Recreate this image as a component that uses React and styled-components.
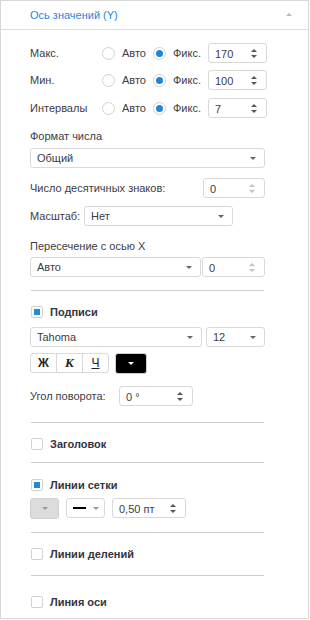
import React from "react"
import styled, { createGlobalStyle } from "styled-components"

const GlobalStyle = createGlobalStyle`
  body {
    margin: 0;
    background: #ffffff;
    font-family: "Liberation Sans", Arial, sans-serif;
  }
`

const App = () => {
  return (
    <Panel>
      <GlobalStyle />
      <Header>
        <Title>Ось значений (Y)</Title>
        <Caret />
      </Header>
      <Body>
        <RadioRow label="Макс." value="170" $mt={13} />
        <RadioRow label="Мин." value="100" $mt={7} />
        <RadioRow label="Интервалы" value="7" $mt={8} />

        <Caption $mt={12}>Формат числа</Caption>
        <Row $mt={6}>
          <Select $w={235}>Общий</Select>
        </Row>

        <Row $mt={10} $between>
          <Label>Число десятичных знаков:</Label>
          <Spin $w={62} value="0" muted />
        </Row>

        <Row $mt={8}>
          <Label $w={54}>Масштаб:</Label>
          <Select $w={149}>Нет</Select>
        </Row>

        <Caption $mt={14}>Пересечение с осью X</Caption>
        <Row $mt={5} $gap={1}>
          <Select $w={171}>Авто</Select>
          <Spin $w={63} value="0" muted />
        </Row>

        <Divider $mt={13} />

        <Check checked $mt={11}>Подписи</Check>
        <Row $mt={5} $gap={4}>
          <Select $w={172}>Tahoma</Select>
          <Select $w={59}>12</Select>
        </Row>
        <Row $mt={6} $gap={6}>
          <StyleGroup>
            <StyleBtn $bold>Ж</StyleBtn>
            <StyleBtn $italic>К</StyleBtn>
            <StyleBtn $under>Ч</StyleBtn>
          </StyleGroup>
          <ColorBtn $fill="#000000" $arrow="#ffffff" />
        </Row>

        <Row $mt={13}>
          <Label $w={89}>Угол поворота:</Label>
          <Spin $w={74} value="0 °" />
        </Row>

        <Divider $mt={16} />
        <Check $mt={11}>Заголовок</Check>
        <Divider $mt={8} />
        <Check checked $mt={12}>Линии сетки</Check>
        <Row $mt={3} $gap={7}>
          <ColorBtn $fill="#dcdcdc" $arrow="#9a9a9a" $w={29} />
          <LineBtn>
            <LineSample />
            <SmallArrow $color="#999" />
          </LineBtn>
          <Spin $w={74} value="0,50 пт" />
        </Row>
        <Divider $mt={14} />
        <Check $mt={11}>Линии делений</Check>
        <Divider $mt={11} />
        <Check $mt={16}>Линия оси</Check>
      </Body>
    </Panel>
  )
}

export default App

const RadioRow = ({ label, value, $mt }) => (
  <Row $mt={$mt}>
    <Label $w={72}>{label}</Label>
    <Radio />
    <RadioText>Авто</RadioText>
    <Radio checked />
    <RadioText>Фикс.</RadioText>
    <Spin $w={59} value={value} push />
  </Row>
)

const Spin = ({ value, $w, muted, push }) => (
  <SpinBox $w={$w} $push={push}>
    <span>{value}</span>
    <Arrows $muted={muted}>
      <Up />
      <Down />
    </Arrows>
  </SpinBox>
)

const Select = ({ children, $w }) => (
  <SelectBox $w={$w}>
    <span>{children}</span>
    <SmallArrow $color="#666" />
  </SelectBox>
)

const Check = ({ checked, children, $mt }) => (
  <CheckRow $mt={$mt}>
    <Box>{checked && <Tick />}</Box>
    <CheckText>{children}</CheckText>
  </CheckRow>
)

const Panel = styled.div`
  width: 309px;
  height: 619px;
  box-sizing: border-box;
  border: 1px solid #d6d6d6;
  background: #ffffff;
  color: #3c3c46;
  font-size: 11px;
  overflow: hidden;
`

const Header = styled.div`
  height: 28px;
  border-bottom: 1px solid #dcdcdc;
  display: flex;
  align-items: center;
  justify-content: space-between;
  padding: 0 16px 0 29px;
`

const Title = styled.div`
  color: #2488d8;
  font-size: 11px;
`

const Caret = styled.div`
  width: 0;
  height: 0;
  border-left: 3px solid transparent;
  border-right: 3px solid transparent;
  border-bottom: 3px solid #b8b8b8;
  margin-top: -1px;
`

const Body = styled.div`
  padding: 0 43px 0 29px;
  display: flex;
  flex-direction: column;
`

const Row = styled.div`
  display: flex;
  align-items: center;
  height: 20px;
  margin-top: ${(p) => p.$mt || 0}px;
  gap: ${(p) => p.$gap || 0}px;
  justify-content: ${(p) => (p.$between ? "space-between" : "flex-start")};
`

const Label = styled.div`
  width: ${(p) => (p.$w ? `${p.$w}px` : "auto")};
  flex-shrink: 0;
  white-space: nowrap;
`

const Caption = styled.div`
  margin-top: ${(p) => p.$mt || 0}px;
  line-height: 12px;
`

const Radio = styled.div`
  width: 13px;
  height: 13px;
  box-sizing: border-box;
  border-radius: 50%;
  border: 1px solid #d2d2d2;
  background: #ffffff;
  flex-shrink: 0;
  display: flex;
  align-items: center;
  justify-content: center;

  &::after {
    content: "";
    width: 7px;
    height: 7px;
    border-radius: 50%;
    background: ${(p) => (p.checked ? "#1f86d6" : "transparent")};
  }
`

const RadioText = styled.span`
  margin: 0 7px;
  white-space: nowrap;
`

const SpinBox = styled.div`
  width: ${(p) => p.$w}px;
  height: 20px;
  box-sizing: border-box;
  border: 1px solid #d9d9d9;
  border-radius: 3px;
  display: flex;
  align-items: center;
  justify-content: space-between;
  padding: 0 9px 0 6px;
  flex-shrink: 0;
  margin-left: ${(p) => (p.$push ? "auto" : "0")};
  white-space: nowrap;

  span {
    padding-top: 1px;
  }
`

const Arrows = styled.div`
  display: flex;
  flex-direction: column;
  gap: 3px;
  color: ${(p) => (p.$muted ? "#c4c4c4" : "#555")};
`

const Up = styled.div`
  width: 0;
  height: 0;
  border-left: 3px solid transparent;
  border-right: 3px solid transparent;
  border-bottom: 3px solid currentColor;
`

const Down = styled(Up)`
  border-bottom: none;
  border-top: 3px solid currentColor;
`

const SelectBox = styled.div`
  width: ${(p) => p.$w}px;
  height: 20px;
  box-sizing: border-box;
  border: 1px solid #d9d9d9;
  border-radius: 3px;
  display: flex;
  align-items: center;
  justify-content: space-between;
  padding: 0 8px 0 6px;
  flex-shrink: 0;
`

const SmallArrow = styled.div`
  width: 0;
  height: 0;
  border-left: 3px solid transparent;
  border-right: 3px solid transparent;
  border-top: 3px solid ${(p) => p.$color};
`

const Divider = styled.div`
  height: 1px;
  background: #cccccc;
  margin: ${(p) => p.$mt || 0}px 1px 0 1px;
`

const CheckRow = styled.div`
  display: flex;
  align-items: center;
  height: 20px;
  margin-top: ${(p) => p.$mt || 0}px;
  padding-left: 1px;
`

const Box = styled.div`
  width: 12px;
  height: 12px;
  box-sizing: border-box;
  border: 1px solid #d2d2d2;
  border-radius: 2px;
  display: flex;
  align-items: center;
  justify-content: center;
`

const Tick = styled.div`
  width: 6px;
  height: 6px;
  background: #2289d6;
`

const CheckText = styled.span`
  margin-left: 7px;
  font-weight: bold;
  color: #333340;
`

const StyleGroup = styled.div`
  display: flex;
  height: 20px;
  box-sizing: border-box;
  border: 1px solid #d9d9d9;
  border-radius: 3px;
`

const StyleBtn = styled.div`
  width: 25px;
  display: flex;
  align-items: center;
  justify-content: center;
  font-family: ${(p) => (p.$italic ? '"Liberation Serif", serif' : '"Liberation Sans", sans-serif')};
  font-weight: ${(p) => (p.$bold || p.$italic ? "bold" : "normal")};
  font-style: ${(p) => (p.$italic ? "italic" : "normal")};
  text-decoration: ${(p) => (p.$under ? "underline" : "none")};
  font-size: ${(p) => (p.$italic ? 13 : 12)}px;
  color: #222;

  & + & {
    border-left: 1px solid #d9d9d9;
  }
`

const ColorBtn = styled.div`
  width: ${(p) => p.$w || 32}px;
  height: 21px;
  box-sizing: border-box;
  border: 1px solid #d0d0d0;
  border-radius: 3px;
  background: ${(p) => p.$fill};
  display: flex;
  align-items: center;
  justify-content: center;

  &::after {
    content: "";
    border-left: 3px solid transparent;
    border-right: 3px solid transparent;
    border-top: 3px solid ${(p) => p.$arrow};
  }
`

const LineBtn = styled.div`
  width: 39px;
  height: 20px;
  box-sizing: border-box;
  border: 1px solid #d9d9d9;
  border-radius: 3px;
  display: flex;
  align-items: center;
  justify-content: center;
  gap: 7px;
`

const LineSample = styled.div`
  width: 13px;
  height: 2px;
  background: #000;
`
